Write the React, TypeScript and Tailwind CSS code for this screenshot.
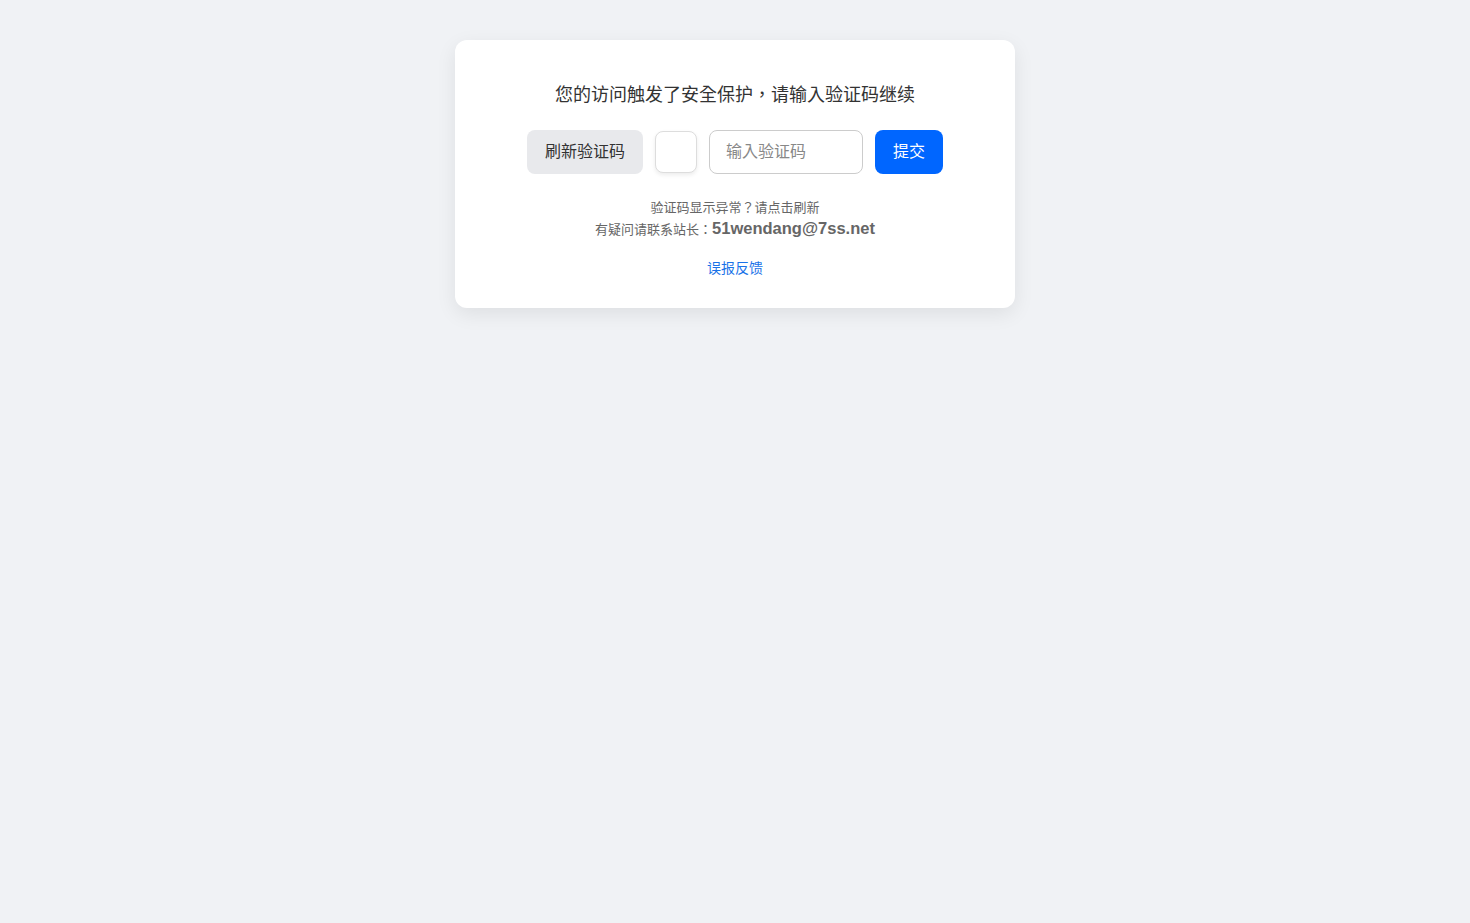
import React from "react";

const font = {
  fontFamily: '"Liberation Sans", "Noto Sans CJK TC", sans-serif',
};

export default function App() {
  return (
    <div className="min-h-[923px] w-full bg-[#f0f2f5] pt-10" style={font}>
      <div className="mx-auto w-[560px] rounded-xl bg-white px-8 pb-7 pt-[42px] text-center shadow-[0_6px_20px_rgba(0,0,0,0.08)]">
        <h1 className="text-[18px] leading-[26px] font-normal text-[#333]">
          您的访问触发了安全保护，请输入验证码继续
        </h1>
        <div className="mt-[22px] flex items-center justify-center gap-3">
          <button className="h-11 w-[116px] rounded-lg bg-[#e8e9ec] text-[16px] text-[#333]">
            刷新验证码
          </button>
          <div className="h-[42px] w-[42px] rounded-lg border border-[#ddd] bg-white shadow-[0_2px_4px_rgba(0,0,0,0.08)]" />
          <input
            className="h-11 w-[154px] rounded-lg border border-[#ccc] px-4 text-[16px] text-[#333] outline-none placeholder:text-[#888]"
            placeholder="输入验证码"
          />
          <button className="h-11 w-[68px] rounded-lg bg-[#0066ff] text-[16px] text-white">
            提交
          </button>
        </div>
        <div className="mt-[23px] text-[13px] leading-[21px] text-[#666]">
          <p>验证码显示异常？请点击刷新</p>
          <p>
            有疑问请联系站长：
            <span className="text-[16.5px] font-bold text-[#666]">51wendang@7ss.net</span>
          </p>
        </div>
        <a href="#" className="mt-[18px] inline-block text-[14px] leading-5 text-[#1a73e8]">
          误报反馈
        </a>
      </div>
    </div>
  );
}
